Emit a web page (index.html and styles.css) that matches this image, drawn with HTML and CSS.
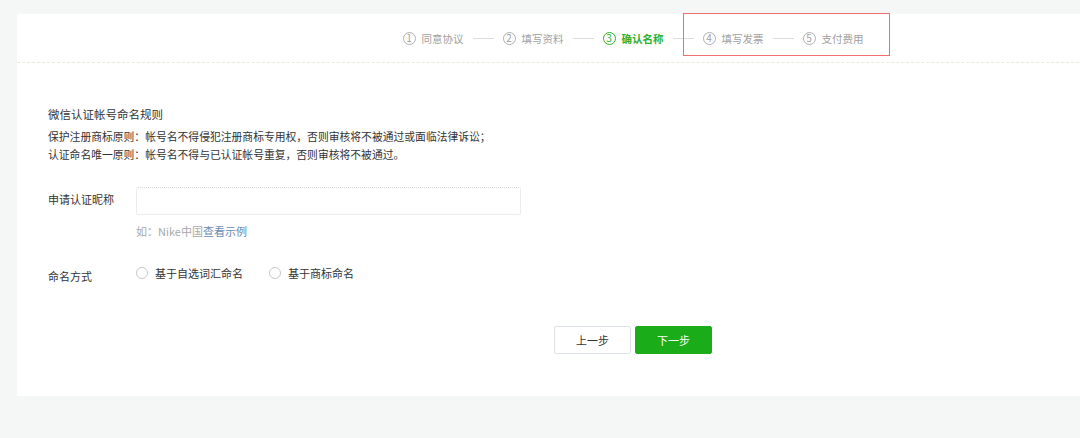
FILE: index.html
```html
<!DOCTYPE html>
<html lang="zh-CN">
<head>
    <meta charset="UTF-8">
    <meta name="viewport" content="width=device-width, initial-scale=1.0">
    <title>微信认证</title>
    <link rel="stylesheet" href="styles.css">
</head>
<body>
    <div class="panel">
        <!-- Step bar -->
        <div class="steps">
            <div class="step"><span class="step-num">1</span>同意协议</div>
            <span class="step-line"></span>
            <div class="step"><span class="step-num">2</span>填写资料</div>
            <span class="step-line"></span>
            <div class="step step-current"><span class="step-num">3</span>确认名称</div>
            <span class="step-line"></span>
            <div class="step"><span class="step-num">4</span>填写发票</div>
            <span class="step-line"></span>
            <div class="step"><span class="step-num">5</span>支付费用</div>
            <div class="highlight-box"></div>
        </div>

        <div class="content">
            <div class="rules">
                <h3 class="rules-title">微信认证帐号命名规则</h3>
                <p>保护注册商标原则：帐号名不得侵犯注册商标专用权，否则审核将不被通过或面临法律诉讼；</p>
                <p>认证命名唯一原则：帐号名不得与已认证帐号重复，否则审核将不被通过。</p>
            </div>

            <div class="form-row">
                <label class="form-label">申请认证昵称</label>
                <div class="form-field">
                    <input class="text-input" type="text">
                    <div class="hint">如：Nike中国<a class="hint-link" href="#">查看示例</a></div>
                </div>
            </div>

            <div class="form-row form-row-radio">
                <label class="form-label">命名方式</label>
                <div class="form-field radio-group">
                    <label class="radio"><span class="radio-dot"></span>基于自选词汇命名</label>
                    <label class="radio"><span class="radio-dot"></span>基于商标命名</label>
                </div>
            </div>

            <div class="actions">
                <button class="btn btn-default">上一步</button>
                <button class="btn btn-primary">下一步</button>
            </div>
        </div>
    </div>
</body>
</html>
```

FILE: styles.css
```css
html, body {
    margin: 0;
    padding: 0;
    overflow: hidden;
}
body {
    font-family: "Noto Sans CJK SC", "Microsoft YaHei", sans-serif;
    background-color: #f5f7f7;
    color: #333;
    height: 438px;
}
.panel {
    width: 1232px;
    height: 382px;
    margin-top: 14px;
    margin-left: 17px;
    background-color: #fff;
}

/* step bar */
.steps {
    position: relative;
    height: 48px;
    display: flex;
    align-items: center;
    justify-content: center;
    border-bottom: 1px dashed #ebe8d8;
    font-size: 10.5px;
    color: #a0a0a0;
}
.step {
    display: flex;
    align-items: center;
}
.step-num {
    width: 11px;
    height: 11px;
    border: 1px solid #b0b0b0;
    border-radius: 50%;
    display: inline-flex;
    align-items: center;
    justify-content: center;
    font-size: 10px;
    line-height: 1;
    margin-right: 6px;
}
.step-current {
    color: #2fb02e;
    font-weight: bold;
}
.step-current .step-num {
    border-color: #2fb02e;
    font-weight: normal;
}
.step-line {
    width: 21px;
    height: 1px;
    background-color: #dcdcdc;
    margin: 0 9px;
}

/* red annotation box over steps 4-5 */
.highlight-box {
    position: absolute;
    left: 666px;
    top: -1px;
    width: 205px;
    height: 41px;
    box-sizing: content-box;
    border-style: solid;
    border-width: 1px;
    border-color: rgb(240, 110, 110);
    color: rgb(240, 110, 110);
}

/* content */
.content {
    padding: 42px 0 0 31px;
}
.rules-title {
    margin: 0 0 4px;
    font-size: 11.5px;
    font-weight: normal;
    line-height: 18px;
    color: #333;
}
.rules p {
    margin: 0;
    font-size: 10.8px;
    line-height: 18px;
    color: #333;
}
.form-row {
    display: flex;
    margin-top: 23px;
}
.form-label {
    width: 88px;
    flex-shrink: 0;
    font-size: 11px;
    line-height: 27px;
    color: #333;
}
.text-input {
    box-sizing: border-box;
    width: 385px;
    height: 28px;
    border: 1px dotted #d6dbe0;
    border-radius: 2px;
    outline: none;
    margin: 0;
}
.hint {
    margin-top: 9px;
    font-size: 11px;
    line-height: 14px;
    color: #a8a8a8;
}
.hint-link {
    color: #6a8ab0;
    text-decoration: none;
}
.form-row-radio {
    margin-top: 25px;
}
.form-row-radio .form-label {
    line-height: 20px;
    padding-top: 3px;
}
.radio-group {
    display: flex;
    align-items: center;
    height: 20px;
}
.radio {
    display: flex;
    align-items: center;
    font-size: 11px;
    color: #333;
    margin-right: 26px;
}
.radio-dot {
    box-sizing: border-box;
    width: 12px;
    height: 12px;
    border: 1px solid #c8c8c8;
    border-radius: 50%;
    margin-right: 7px;
}

/* buttons */
.actions {
    display: flex;
    justify-content: center;
    gap: 4px;
    margin-top: 40px;
    margin-left: -31px;
}
.btn {
    width: 77px;
    height: 28px;
    font-family: inherit;
    font-size: 11px;
    border-radius: 2px;
    cursor: pointer;
}
.btn-default {
    background-color: #fff;
    border: 1px solid #dde3e6;
    color: #333;
}
.btn-primary {
    background-color: #1aad19;
    border: 1px solid #1aad19;
    color: #fff;
}
```
